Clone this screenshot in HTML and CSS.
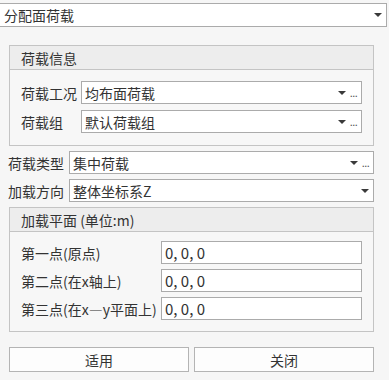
FILE: index.html
```html
<!DOCTYPE html>
<html lang="zh-CN">
<head>
    <meta charset="UTF-8">
    <meta name="viewport" content="width=device-width, initial-scale=1.0">
    <title>分配面荷载</title>
    <link rel="stylesheet" href="styles.css">
</head>
<body>
    <div class="panel">
        <div class="combo top-combo">
            <span class="combo-text">分配面荷载</span>
            <span class="arrow"></span>
        </div>

        <div class="group group-info">
            <div class="group-header">荷载信息</div>
            <div class="group-body">
                <div class="row">
                    <label class="label">荷载工况</label>
                    <div class="combo field">
                        <span class="combo-text">均布面荷载</span>
                        <span class="arrow"></span>
                        <span class="dots">...</span>
                    </div>
                </div>
                <div class="row">
                    <label class="label">荷载组</label>
                    <div class="combo field">
                        <span class="combo-text">默认荷载组</span>
                        <span class="arrow"></span>
                        <span class="dots">...</span>
                    </div>
                </div>
            </div>
        </div>

        <div class="row outer-row">
            <label class="label short">荷载类型</label>
            <div class="combo field">
                <span class="combo-text">集中荷载</span>
                <span class="arrow"></span>
                <span class="dots">...</span>
            </div>
        </div>
        <div class="row outer-row">
            <label class="label short">加载方向</label>
            <div class="combo field">
                <span class="combo-text">整体坐标系Z</span>
                <span class="arrow"></span>
            </div>
        </div>

        <div class="group group-plane">
            <div class="group-header">加载平面 (单位:m)</div>
            <div class="group-body">
                <div class="row">
                    <label class="label wide">第一点(原点)</label>
                    <input class="text-input" type="text" value="0, 0, 0">
                </div>
                <div class="row">
                    <label class="label wide">第二点(在x轴上)</label>
                    <input class="text-input" type="text" value="0, 0, 0">
                </div>
                <div class="row">
                    <label class="label wide">第三点(在x—y平面上)</label>
                    <input class="text-input" type="text" value="0, 0, 0">
                </div>
            </div>
        </div>

        <div class="buttons">
            <button class="btn">适用</button>
            <button class="btn">关闭</button>
        </div>
    </div>
</body>
</html>
```

FILE: styles.css
```css
body {
    margin: 0;
    background-color: #f6f6f6;
    font-family: "Noto Sans CJK SC", "Noto Sans", sans-serif;
    font-size: 14px;
    color: #333;
    overflow: hidden;
}
.panel {
    width: 389px;
    height: 380px;
    padding-top: 3px;
    box-sizing: border-box;
}
.combo {
    display: flex;
    align-items: center;
    background-color: #fff;
    border: 1px solid #ababab;
    box-sizing: border-box;
}
.combo-text {
    flex: 1;
    padding-left: 3px;
    white-space: nowrap;
    line-height: 1;
}
.top-combo {
    width: 388px;
    height: 24px;
    margin-left: -1px;
}
.top-combo .combo-text {
    padding-left: 4px;
}
.arrow {
    width: 0;
    height: 0;
    border-left: 4px solid transparent;
    border-right: 4px solid transparent;
    border-top: 4px solid #3a3a3a;
    margin-right: 4px;
}
.dots {
    font-family: "DejaVu Sans", sans-serif;
    font-size: 11px;
    line-height: 1;
    color: #555;
    letter-spacing: -1px;
    align-self: flex-end;
    padding-bottom: 4px;
    margin-right: 4px;
}
.group {
    width: 365px;
    margin-left: 9px;
    border: 1px solid #c4c4c4;
    box-sizing: border-box;
    background-color: #f7f7f7;
}
.group-info {
    margin-top: 18px;
}
.group-plane {
    margin-top: 5px;
}
.group-header {
    height: 23px;
    display: flex;
    align-items: center;
    padding-left: 11px;
    background-color: #ededed;
    border-bottom: 1px solid #c4c4c4;
}
.group-body {
    display: flex;
    flex-direction: column;
    gap: 6px;
    padding: 11px 11px 12px 11px;
}
.group-plane .group-body {
    gap: 5px;
    padding-top: 9px;
    padding-bottom: 11px;
}
.row {
    display: flex;
    align-items: center;
}
.label {
    width: 60px;
    white-space: nowrap;
}
.label.short {
    width: 61px;
}
.label.wide {
    width: 140px;
}
.field {
    flex: 1;
    height: 23px;
}
.outer-row {
    margin-top: 5px;
    margin-left: 8px;
    width: 366px;
}
.text-input {
    flex: 1;
    height: 23px;
    box-sizing: border-box;
    border: 1px solid #ababab;
    background-color: #fff;
    font-family: "Noto Sans CJK SC", "Noto Sans", sans-serif;
    font-size: 15px;
    color: #333;
    padding: 0 0 0 3px;
    outline: none;
}
.buttons {
    display: flex;
    gap: 5px;
    margin-top: 15px;
    margin-left: 9px;
    width: 365px;
}
.btn {
    flex: 1;
    height: 25px;
    background-color: #fdfdfd;
    border: 1px solid #b4b4b4;
    font-family: "Noto Sans CJK SC", "Noto Sans", sans-serif;
    font-size: 14px;
    color: #333;
    padding: 0;
}
```
